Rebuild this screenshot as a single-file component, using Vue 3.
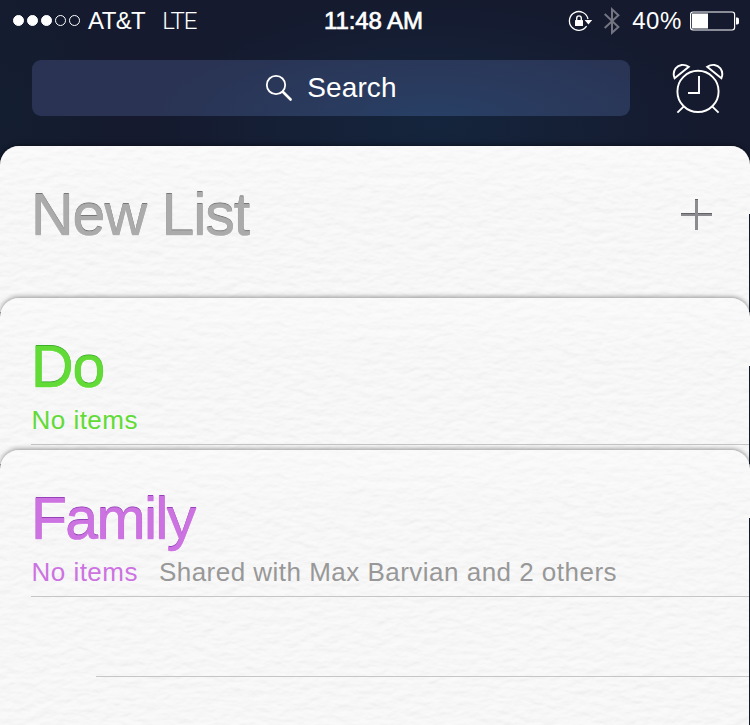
<script setup>
const signal = [true, true, true, false, false]

const lists = [
  { name: 'New List', tone: 'grey', isNew: true },
  { name: 'Do', tone: 'green', count: 'No items' },
  {
    name: 'Family',
    tone: 'purple',
    count: 'No items',
    shared: 'Shared with Max Barvian and 2 others',
    open: true
  }
]
</script>

<template>
  <div class="screen">
    <header class="top">
      <div class="status">
        <div class="carrier">
          <span class="dots">
            <i v-for="(on, n) in signal" :key="n" class="dot" :class="{ on }"></i>
          </span>
          <span class="operator">AT&amp;T</span>
          <span class="network">LTE</span>
        </div>
        <div class="time">11:48 AM</div>
        <div class="indicators">
          <svg class="lock" width="26" height="24" viewBox="567 8 26 24" fill="none" stroke="#fff">
            <path d="M588 18 A9.4 9.4 0 1 0 586.6 25.2" stroke-width="1.3" />
            <path d="M584.6 19 H592.2 L588.4 23.4 Z" fill="#fff" stroke="none" />
            <rect x="575" y="19" width="8" height="6" rx="0.6" fill="#fff" stroke="none" />
            <path d="M576.7 19.5 V17.2 A2.3 2.3 0 0 1 581.3 17.2 V19.5" stroke-width="1.4" />
          </svg>
          <svg class="bluetooth" width="17" height="28" viewBox="603 6.5 17 28" fill="none" stroke="#737581" stroke-width="2">
            <path d="M604.7 13.4 L618.4 26.4 L612 32.2 V8.8 L618.4 14.8 L604.7 27.6" />
          </svg>
          <span class="percent">40%</span>
          <svg class="battery" width="50" height="20" viewBox="690 10.5 50 20">
            <rect x="690.6" y="11.5" width="44" height="18" rx="2.4" fill="none" stroke="#fff" stroke-width="1.2" />
            <rect x="692" y="13" width="16" height="15" fill="#fff" />
            <path d="M736 17 h1.2 q1.8 0 1.8 1.8 v3.4 q0 1.8 -1.8 1.8 h-1.2 z" fill="#fff" />
          </svg>
        </div>
      </div>

      <div class="tools">
        <div class="search">
          <svg width="28" height="28" viewBox="265 74 28 28" fill="none" stroke="#fff">
            <circle cx="276" cy="85" r="9.2" stroke-width="1.8" />
            <path d="M282.8 91.8 L290.6 99.5" stroke-width="2.6" stroke-linecap="round" />
          </svg>
          <span>Search</span>
        </div>
        <svg class="alarm" width="52" height="52" viewBox="672 62 52 52" fill="none" stroke="#fff" stroke-width="1.9">
          <circle cx="698" cy="91.4" r="20.6" />
          <path d="M699 76 V93 H688" />
          <path d="M683.6 106.6 L677.4 112.6 M712.4 106.6 L718.6 112.6" />
          <path d="M674.6 78.2 L688.8 66.8 C684 63.6 678.6 64.6 675.6 68.4 C673.4 71.4 673.2 74.8 674.6 78.2 Z" />
          <path d="M721.4 78.2 L707.2 66.8 C712 63.6 717.4 64.6 720.4 68.4 C722.6 71.4 722.8 74.8 721.4 78.2 Z" />
        </svg>
      </div>
    </header>

    <main class="stack">
      <section v-for="list in lists" :key="list.name" class="card" :class="[list.tone, { open: list.open }]">
        <svg class="paper" width="750" height="300" aria-hidden="true">
          <filter :id="'grain-' + list.tone" x="0" y="0" width="100%" height="100%" color-interpolation-filters="sRGB">
            <feTurbulence type="fractalNoise" baseFrequency="0.07 0.14" numOctaves="3" seed="8" />
            <feDiffuseLighting surfaceScale="0.8" diffuseConstant="1" lighting-color="#fff">
              <feDistantLight azimuth="80" elevation="72" />
            </feDiffuseLighting>
          </filter>
          <rect width="750" height="300" :filter="`url(#grain-${list.tone})`" />
        </svg>
        <div class="heading">
          <h2>{{ list.name }}</h2>
          <svg v-if="list.isNew" class="plus" width="31" height="31" viewBox="0 0 31 31">
            <path d="M14 0 h3 v14 h14 v3 h-14 v14 h-3 v-14 h-14 v-3 h14 z" fill="#8b8b8f" />
            <path d="M14 0 h3 v1 h-3 z M0 14 h14 v1 h-14 z M17 14 h14 v1 h-14 z" fill="#636366" />
          </svg>
        </div>
        <p v-if="list.count" class="meta">
          <span class="count">{{ list.count }}</span>
          <span v-if="list.shared" class="shared">{{ list.shared }}</span>
        </p>
        <div v-if="list.count" class="rule"></div>
        <div v-if="list.open" class="rule row"></div>
      </section>
    </main>
  </div>
</template>

<style>
body {
  background: #151a2e;
  overflow: hidden;
}
</style>

<style scoped>
.screen {
  display: flex;
  flex-direction: column;
  width: 750px;
  height: 725px;
  overflow: hidden;
  color: #fff;
  font-family: "Liberation Sans", Arial, sans-serif;
  background:
    radial-gradient(ellipse 280px 130px at 430px 125px, rgba(20, 44, 70, 0.6), transparent),
    radial-gradient(ellipse 110px 150px at 0 110px, rgba(18, 34, 50, 0.6), transparent),
    #151a2e;
}
.top {
  height: 146px;
  flex: none;
}
.status {
  display: grid;
  grid-template-columns: 1fr auto 1fr;
  align-items: center;
  height: 41px;
  padding: 0 11px 0 13px;
  font-size: 24px;
  line-height: 28px;
}
.carrier,
.indicators,
.dots {
  display: flex;
  align-items: center;
}
.dots {
  gap: 3px;
}
.dot {
  width: 11px;
  height: 11px;
  box-sizing: border-box;
  border: 1px solid #fff;
  border-radius: 50%;
}
.dot.on {
  background: #fff;
}
.operator {
  margin-left: 8px;
  letter-spacing: -0.6px;
}
.network {
  margin-left: 17px;
  font-family: Roboto, "Liberation Sans", sans-serif;
  font-weight: 300;
  letter-spacing: -1.1px;
}
.time {
  margin-right: 5px;
  letter-spacing: -0.1px;
  -webkit-text-stroke: 0.7px #fff;
}
.indicators {
  justify-content: flex-end;
}
.bluetooth {
  margin-left: 10px;
}
.percent {
  margin-left: 12px;
  letter-spacing: 0.6px;
}
.battery {
  margin-left: 8px;
  margin-right: -1px;
}
.tools {
  display: flex;
  align-items: flex-start;
  padding: 19px 26px 0 32px;
}
.search {
  display: flex;
  align-items: center;
  justify-content: center;
  gap: 14px;
  width: 598px;
  height: 56px;
  border-radius: 9px;
  font-size: 28px;
  letter-spacing: 0.1px;
  background:
    radial-gradient(ellipse 280px 90px at 400px 60px, rgba(40, 68, 108, 0.75), transparent),
    #2a3353;
}
.alarm {
  margin: 2px 0 0 42px;
}
.stack {
  display: flex;
  flex-direction: column;
}
.card {
  position: relative;
  flex: none;
  box-sizing: border-box;
  height: 166px;
  margin-bottom: -14px;
  padding-top: 39px;
  overflow: hidden;
  border-radius: 19px 19px 0 0;
  background: #f9f9f9;
  box-shadow: 0 -1px 5px rgba(0, 0, 0, 0.42);
}
.card.open {
  height: 300px;
}
.paper {
  position: absolute;
  inset: 0;
  opacity: 0.28;
}
.card::before {
  content: "";
  position: absolute;
  z-index: 1;
  top: 68px;
  right: 0;
  bottom: 0;
  width: 1px;
  background: #151a2e;
}
.card::after {
  content: "";
  position: absolute;
  inset: 0 0 auto;
  height: 60px;
  background: linear-gradient(rgba(255, 255, 255, 0.3), rgba(255, 255, 255, 0));
}
.heading {
  position: relative;
  z-index: 1;
  display: flex;
  align-items: center;
  justify-content: space-between;
  height: 60px;
  padding: 0 38px 0 31px;
}
h2 {
  margin: 0;
  font-size: 59px;
  line-height: 60px;
  font-weight: 400;
  letter-spacing: -1px;
}
.grey h2 {
  color: #ababab;
  -webkit-text-stroke: 0.6px #ababab;
  text-shadow: 0 -1px 0 #636363, 0 1px 1px #fff;
}
.green h2 {
  color: #62db37;
  -webkit-text-stroke: 0.6px #62db37;
  text-shadow: 0 -1px 0 #2f9e24, 0 1px 1px #fff;
}
.purple h2 {
  color: #cc73e1;
  letter-spacing: -1.7px;
  -webkit-text-stroke: 0.6px #cc73e1;
  text-shadow: 0 -1px 0 #8431ab, 0 1px 1px #fff;
}
.plus {
  margin-top: -1px;
}
.meta {
  position: relative;
  display: flex;
  gap: 21px;
  margin: 8px 0 9px;
  padding-left: 31.5px;
  font-size: 26px;
  line-height: 30px;
  letter-spacing: 0.48px;
  white-space: nowrap;
}
.green .count {
  color: #62db37;
}
.purple .count {
  color: #cc73e1;
}
.shared {
  color: #989898;
}
.rule {
  position: relative;
  height: 1px;
  margin: 0 1px 0 31px;
  background: #c6c6c6;
}
.rule.row {
  margin: 79px 1px 0 96px;
}
</style>
